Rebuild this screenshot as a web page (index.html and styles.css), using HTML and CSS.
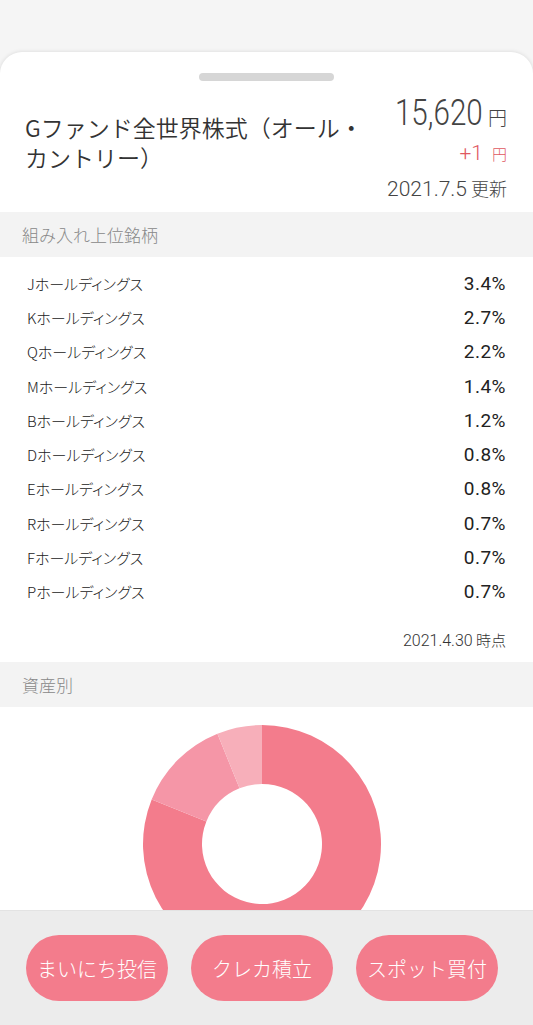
FILE: index.html
```html
<!DOCTYPE html>
<html lang="ja">
<head>
<meta charset="utf-8">
<title>Gファンド全世界株式</title>
<link rel="stylesheet" href="styles.css">
</head>
<body>
<div class="sheet">
  <div class="handle"></div>
  <div class="head">
    <h1 class="title">Gファンド全世界株式（オール・カントリー）</h1>
    <div class="price">
      <div class="price-main"><span class="num">15,620</span><span class="yen">円</span></div>
      <div class="diff"><span class="dnum">+1</span><span class="dyen">円</span></div>
      <div class="updated"><span class="dnum2">2021.7.5</span> 更新</div>
    </div>
  </div>

  <div class="sec">組み入れ上位銘柄</div>
  <ul class="holdings">
    <li><span>Jホールディングス</span><span class="pct">3.4%</span></li>
    <li><span>Kホールディングス</span><span class="pct">2.7%</span></li>
    <li><span>Qホールディングス</span><span class="pct">2.2%</span></li>
    <li><span>Mホールディングス</span><span class="pct">1.4%</span></li>
    <li><span>Bホールディングス</span><span class="pct">1.2%</span></li>
    <li><span>Dホールディングス</span><span class="pct">0.8%</span></li>
    <li><span>Eホールディングス</span><span class="pct">0.8%</span></li>
    <li><span>Rホールディングス</span><span class="pct">0.7%</span></li>
    <li><span>Fホールディングス</span><span class="pct">0.7%</span></li>
    <li><span>Pホールディングス</span><span class="pct">0.7%</span></li>
  </ul>
  <div class="asof"><span class="dnum2">2021.4.30</span> 時点</div>

  <div class="sec">資産別</div>
  <div class="chart">
    <svg width="240" height="240" viewBox="0 0 240 240">
      <path d="M120 1 A119 119 0 1 1 9.67 75.42 L64.37 97.52 A60 60 0 1 0 120 60 Z" fill="#f37c8c"/>
      <path d="M9.67 75.42 A119 119 0 0 1 75.42 9.67 L97.52 64.37 A60 60 0 0 0 64.37 97.52 Z" fill="#f596a7"/>
      <path d="M75.42 9.67 A119 119 0 0 1 120 1 L120 60 A60 60 0 0 0 97.52 64.37 Z" fill="#f7afba"/>
    </svg>
  </div>
</div>

<div class="actions">
  <button class="btn">まいにち投信</button>
  <button class="btn">クレカ積立</button>
  <button class="btn">スポット買付</button>
</div>
</body>
</html>
```

FILE: styles.css
```css
html, body {
  margin: 0;
  padding: 0;
}
body {
  background: #f5f5f5;
  font-family: "Noto Sans CJK JP", "Noto Sans", sans-serif;
  font-weight: 300;
  color: #333;
  height: 1025px;
  overflow: hidden;
}
.sheet {
  margin-top: 52px;
  padding-top: 21px;
  background: #fff;
  border-radius: 22px 22px 0 0;
  box-shadow: 0 0 4px rgba(0, 0, 0, 0.12);
  min-height: 960px;
}
.handle {
  width: 135px;
  height: 8px;
  border-radius: 4px;
  background: #d6d6d6;
  margin: 0 auto;
}
.head {
  display: flex;
  justify-content: space-between;
  height: 131px;
  padding: 0 26px 0 25px;
}
.title {
  margin: 31px 0 0;
  width: 340px;
  font-size: 23px;
  line-height: 30px;
  font-weight: 350;
  color: #333;
}
.price {
  text-align: right;
  font-family: Roboto, "Noto Sans CJK JP", sans-serif;
  color: #444;
}
.price-main {
  margin-top: 12px;
  height: 40px;
  line-height: 40px;
  white-space: nowrap;
}
.num {
  display: inline-block;
  font-size: 37px;
  font-weight: 300;
  transform: scaleX(0.8);
  transform-origin: right center;
  margin-right: 5px;
}
.yen {
  font-family: "Noto Sans CJK JP", sans-serif;
  font-size: 19px;
}
.diff {
  margin-top: 7px;
  line-height: 26px;
  color: #e0585f;
}
.dnum {
  font-size: 21px;
  font-weight: 300;
  margin-right: 9px;
}
.dyen {
  font-family: "Noto Sans CJK JP", sans-serif;
  font-size: 15px;
}
.updated {
  margin-top: 7px;
  line-height: 26px;
  font-size: 18px;
  color: #444;
  font-family: "Noto Sans CJK JP", sans-serif;
}
.dnum2 {
  font-family: Roboto, sans-serif;
  font-weight: 300;
  font-size: 21px;
}
.sec {
  height: 45px;
  line-height: 45px;
  background: #f3f3f3;
  padding-left: 22px;
  font-size: 17px;
  color: #888;
}
.holdings {
  list-style: none;
  margin: 0;
  padding: 9px 27px 0 27px;
}
.holdings li {
  display: flex;
  justify-content: space-between;
  align-items: center;
  height: 34.3px;
  font-size: 15px;
  color: #222;
  font-feature-settings: "palt";
}
.pct {
  font-family: Roboto, sans-serif;
  font-weight: 400;
  font-size: 19px;
  letter-spacing: 0.5px;
  color: #222;
}
.asof {
  text-align: right;
  padding: 21px 27px 11px 0;
  line-height: 20px;
  font-size: 15px;
  color: #333;
}
.asof .dnum2 {
  font-size: 16px;
}
.chart {
  display: flex;
  justify-content: center;
  padding: 17px 9px 0 0;
}
.actions {
  position: fixed;
  left: 0;
  right: 0;
  bottom: 0;
  height: 115px;
  box-sizing: border-box;
  background: #ececec;
  border-top: 1px solid #e3e3e3;
  display: flex;
  gap: 23px;
  padding: 24px 0 0 26px;
}
.btn {
  width: 142px;
  height: 66px;
  border: none;
  border-radius: 33px;
  background: #f37c8c;
  color: #fff;
  font-family: "Noto Sans CJK JP", sans-serif;
  font-weight: 300;
  font-size: 20px;
  padding: 0;
}
```
